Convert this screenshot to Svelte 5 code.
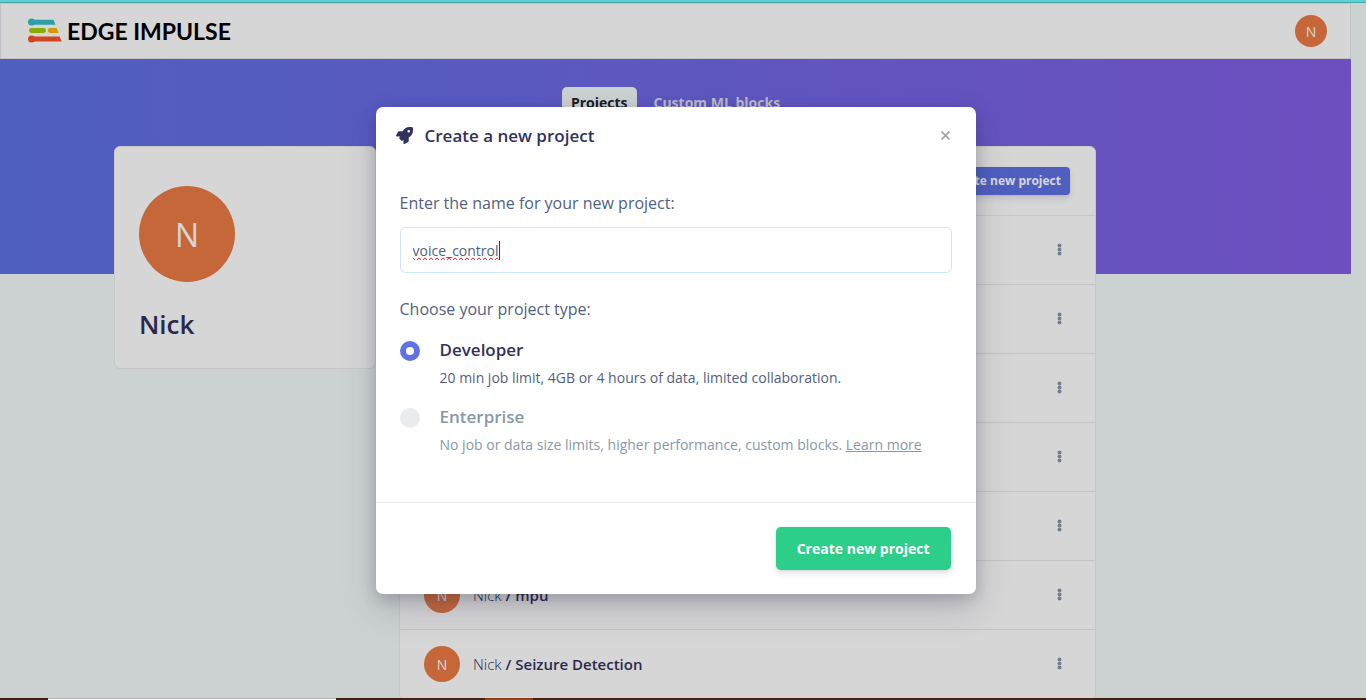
<script>
  let projectName = $state('voice_control');
  let projectType = $state('developer');

  const projects = [
    {}, {}, {}, {}, {},
    { owner: 'Nick', name: 'mpu' },
    { owner: 'Nick', name: 'Seizure Detection' }
  ];
</script>

<div class="shell">
  <div class="strip"></div>
  <div class="viewport">
    <div class="page">
      <header class="topbar">
        <a class="brand" href="/" aria-label="Edge Impulse">
          <svg width="34" height="26" viewBox="0 0 34 26" aria-hidden="true">
            <g fill="#38bccb"><circle cx="3.600" cy="4" r="3.600" /><path d="M4 1.800h21.500l2 4.900H4z" /></g>
            <rect x="1" y="10.100" width="17" height="4.900" rx="2.400" fill="#a4cd00" />
            <path d="M22.300 10.100h6.200l2.200 4.900h-8.400a2.400 2.400 0 0 1 0-4.900z" fill="#fdb600" />
            <g fill="#f95328"><circle cx="3.600" cy="21" r="3.600" /><path d="M4 18.500h27.500l2.300 4.900H4z" /></g>
          </svg>
          <span>EDGE IMPULSE</span>
        </a>
        <div class="avatar small">N</div>
      </header>

      <div class="hero">
        <nav class="tabs">
          <a class="tab active" href="#projects">Projects</a>
          <a class="tab" href="#blocks">Custom ML blocks</a>
        </nav>
      </div>

      <main class="content">
        <section class="card profile">
          <div class="avatar large">N</div>
          <h1>Nick</h1>
        </section>
        <section class="card list">
          <div class="list-head">
            <button class="add" type="button">Create new project</button>
          </div>
          {#each projects as project}
            <div class="row">
              {#if project.name}
                <div class="avatar medium">N</div>
                <span class="project"><span class="owner">{project.owner}</span> / {project.name}</span>
              {/if}
              <button class="kebab" type="button" aria-label="Project menu">
                <svg width="6" height="14" viewBox="0 0 6 14" fill="#8898aa" aria-hidden="true">
                  <circle cx="2.500" cy="2.500" r="2" /><circle cx="2.500" cy="6.500" r="2" /><circle cx="2.500" cy="10.500" r="2" />
                </svg>
              </button>
            </div>
          {/each}
        </section>
      </main>
    </div>

    <div class="backdrop">
      <form class="modal" role="dialog" aria-labelledby="modal-title" onsubmit={(e) => e.preventDefault()}>
        <div class="modal-head">
          <svg width="17" height="17" viewBox="0 0 512 512" fill="#32325d" aria-hidden="true">
            <path d="M505.120 19.094c-1.189-5.531-6.658-11-12.207-12.188C460.716 0 435.507 0 410.407 0 307.175 0 245.269 55.203 199.052 128H94.838c-16.348.016-35.557 11.875-42.887 26.484L2.516 253.297A28.400 28.400 0 0 0 0 264a24.008 24.008 0 0 0 24.006 24h103.844l-22.475 22.469c-11.365 11.361-12.996 32.257 0 45.250l50.904 50.906c11.156 11.188 32.220 13.156 45.277 0L224 384.125V488a24.008 24.008 0 0 0 24 24 28.559 28.559 0 0 0 10.707-2.516l98.728-49.390c14.629-7.297 26.508-26.500 26.508-42.859V312.797c72.594-46.313 128.030-108.406 128.030-211.094.078-25.200.078-50.406-6.853-82.609zM384.040 168a40 40 0 1 1 40-40 40.023 40.023 0 0 1-40 40z" />
          </svg>
          <h2 id="modal-title">Create a new project</h2>
          <button class="close" type="button" aria-label="Close">
            <svg width="9" height="9" viewBox="0 0 9 9" stroke="#a8a8a8" stroke-width="1.800" aria-hidden="true"><path d="M.500.500l8 8M8.500.500l-8 8" /></svg>
          </button>
        </div>

        <div class="modal-body">
          <label class="prompt" for="project-name">Enter the name for your new project:</label>
          <div class="field">
            <input id="project-name" type="text" bind:value={projectName} spellcheck="false" />
            <span class="caret"></span>
          </div>

          <fieldset>
            <legend class="prompt">Choose your project type:</legend>
            <div class="option">
              <input id="developer" type="radio" name="type" value="developer" bind:group={projectType} />
              <div class="option-text">
                <label for="developer">Developer</label>
                <p>20 min job limit, 4GB or 4 hours of data, limited collaboration.</p>
              </div>
            </div>
            <div class="option muted">
              <input id="enterprise" type="radio" name="type" value="enterprise" bind:group={projectType} disabled />
              <div class="option-text">
                <label for="enterprise">Enterprise</label>
                <p>No job or data size limits, higher performance, custom blocks. <a href="#enterprise">Learn more</a></p>
              </div>
            </div>
          </fieldset>
        </div>

        <div class="modal-foot">
          <button class="submit" type="submit">Create new project</button>
        </div>
      </form>
    </div>
  </div>
  <div class="taskbar"><span class="window"></span><span class="running"></span></div>
</div>

<style>
  :global(body) { margin: 0; }
  .shell, .shell * { box-sizing: border-box; }
  .shell {
    display: grid;
    grid-template-rows: 3px minmax(0, 1fr) 2px;
    height: 100vh;
    font-family: "Open Sans", "Noto Sans", sans-serif;
    font-size: 14px;
    color: #525f7f;
  }
  button, input { font-family: inherit; }
  .strip { background: #5ad1d6; border-bottom: 1px solid #4aa5a8; }
  .viewport { position: relative; overflow: hidden; background: #f4f9fa; padding-right: 15px; }

  .topbar {
    display: flex;
    align-items: center;
    justify-content: space-between;
    height: 56px;
    padding: 0 23px 0 27px;
    background: #fff;
    border: 1px solid #e6e8ef;
  }
  .brand { display: flex; align-items: center; gap: 5px; text-decoration: none; color: #000; }
  .brand span { font: 700 23px/28px Lato, sans-serif; }
  .avatar {
    display: flex;
    align-items: center;
    justify-content: center;
    flex: none;
    border-radius: 50%;
    background: #ec7b46;
    color: #fff;
  }
  .small { width: 32px; height: 32px; font-size: 14px; }
  .medium { width: 36px; height: 36px; font-size: 14px; }
  .large { width: 96px; height: 96px; font-size: 32px; }

  .hero { height: 215px; padding-top: 28px; background: linear-gradient(87deg, #5e72e4, #825ee4); }
  .tabs { display: flex; justify-content: center; gap: 8px; }
  .tab { padding: 0 9px; border-radius: 5px; font-size: 14px; font-weight: 700; line-height: 32px; color: #dedfed; text-decoration: none; }
  .tab.active { background: #f4f9fa; color: #212529; }

  .content {
    display: grid;
    grid-template-columns: 262fr 697fr 118fr;
    gap: 23px;
    align-items: start;
    max-width: 1171px;
    margin: -128px auto 0;
    padding: 0 24px;
  }
  .card { background: #fff; border: 1px solid #ededef; border-radius: 6px; }
  .profile { padding: 39px 24px 24px; }
  h1 { margin: 24px 0 2px; font-size: 26px; font-weight: 600; line-height: 36px; color: #32325d; }
  .list-head { display: flex; align-items: center; justify-content: flex-end; height: 69px; padding: 0 25px; border-bottom: 1px solid #ececec; }
  .add {
    padding: 0 9px;
    border: 0;
    border-radius: 4px;
    background: #5e72e4;
    color: #fff;
    font-size: 12px;
    font-weight: 700;
    line-height: 28px;
    box-shadow: 0 4px 6px rgba(50, 50, 93, .11), 0 1px 3px rgba(0, 0, 0, .08);
  }
  .row { display: flex; align-items: center; gap: 13px; height: 69px; padding: 0 24px; border-bottom: 1px solid #e9e9ec; }
  .project { font-size: 15px; font-weight: 600; color: #32325d; }
  .owner { font-weight: 300; }
  .kebab { display: flex; justify-content: center; width: 22px; margin-left: auto; padding: 0; border: 0; background: none; }

  .backdrop {
    position: absolute;
    inset: 0;
    display: flex;
    align-items: center;
    justify-content: center;
    padding-right: 15px;
    background: rgba(0, 0, 0, .16);
  }
  .modal { width: 100%; max-width: 600px; background: #fff; border-radius: 7px; box-shadow: 0 15px 35px rgba(50, 50, 93, .2), 0 5px 15px rgba(0, 0, 0, .17); }
  .modal-head { display: flex; align-items: center; gap: 12px; height: 57px; padding: 0 20px; }
  h2 { margin: 0; font-size: 17px; font-weight: 600; line-height: 26px; color: #32325d; }
  .close { display: flex; margin-left: auto; padding: 6px; border: 0; background: none; }
  .modal-body { padding: 27px 24px 47px; }
  .prompt { display: block; padding: 0; font-size: 16px; line-height: 24px; }
  .field { position: relative; margin: 12px 0 24px; font-size: 14px; }
  .field input {
    display: block;
    width: 100%;
    height: 46px;
    padding: 0 12px;
    border: 1px solid #c9e6f3;
    border-radius: 6px;
    outline: 0;
    color: #525f7f;
    font-size: 14px;
    caret-color: transparent;
    text-decoration: underline wavy #f00 1px;
    text-decoration: spelling-error;
  }
  .caret { position: absolute; left: 99px; top: 14px; width: 1px; height: 19px; background: #32325d; }
  fieldset { display: flex; flex-direction: column; gap: 17px; margin: 0; padding: 0; border: 0; }
  legend { margin-bottom: 17px; }
  .option { display: flex; gap: 20px; }
  .option input {
    appearance: none;
    flex: none;
    width: 20px;
    height: 20px;
    margin: 3px 0 0;
    border-radius: 50%;
    background: #e9ecef;
  }
  .option input:checked { background: #fff; border: 6px solid #5e72e4; }
  .option-text { display: flex; flex-direction: column; gap: 5px; }
  .option label { font-size: 17px; font-weight: 600; line-height: 24px; color: #32325d; }
  .option p { margin: 0; font-size: 14px; line-height: 21px; }
  .option.muted label, .option.muted p, .option.muted a { color: #8898aa; }
  .modal-foot { display: flex; justify-content: flex-end; padding: 24px 25px 24px; border-top: 1px solid #e9ecef; }
  .submit {
    height: 43px;
    padding: 0 21px;
    border: 0;
    border-radius: 5px;
    background: #2dce89;
    color: #fff;
    font-size: 14px;
    font-weight: 700;
    box-shadow: 0 4px 6px rgba(50, 50, 93, .11), 0 1px 3px rgba(0, 0, 0, .08);
  }
  .taskbar { display: flex; background: #45210f; }
  .window { width: 288px; margin-left: 48px; background: #fff; border-top: 1px solid #b5b5b5; }
  .running { width: 48px; margin-left: 149px; background: #8d4217; }
</style>
